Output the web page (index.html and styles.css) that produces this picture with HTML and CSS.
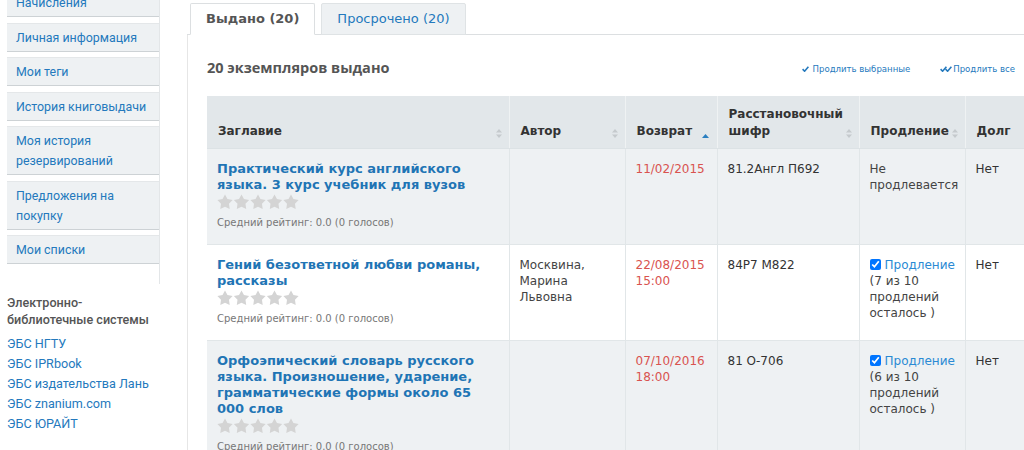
FILE: index.html
```html
<!DOCTYPE html>
<html lang="ru">
<head>
    <meta charset="UTF-8">
    <meta name="viewport" content="width=device-width, initial-scale=1.0">
    <title>Мои экземпляры</title>
    <link rel="stylesheet" href="styles.css">
</head>
<body>
    <!-- one star shape, reused by every rating row -->
    <svg class="defs" width="0" height="0">
        <symbol id="star" viewBox="0 0 16 16">
            <polygon points="8,0.5 10.47,5.1 15.61,6.03 11.99,9.8 12.7,14.97 8,12.7 3.3,14.97 4.01,9.8 0.39,6.03 5.53,5.1"/>
        </symbol>
    </svg>

    <div class="page">
        <aside class="sidebar">
            <ul class="side-nav">
                <li><a href="#">Начисления</a></li>
                <li><a href="#">Личная информация</a></li>
                <li><a href="#">Мои теги</a></li>
                <li><a href="#">История книговыдачи</a></li>
                <li><a href="#">Моя история резервирований</a></li>
                <li><a href="#">Предложения на покупку</a></li>
                <li><a href="#">Мои списки</a></li>
            </ul>
            <div class="ebs">
                <h3>Электронно-библиотечные системы</h3>
                <ul>
                    <li><a href="#">ЭБС НГТУ</a></li>
                    <li><a href="#">ЭБС IPRbook</a></li>
                    <li><a href="#">ЭБС издательства Лань</a></li>
                    <li><a href="#">ЭБС znanium.com</a></li>
                    <li><a href="#">ЭБС ЮРАЙТ</a></li>
                </ul>
            </div>
        </aside>

        <main class="content">
            <ul class="tabs">
                <li class="tab active"><a href="#">Выдано (20)</a></li>
                <li class="tab"><a href="#">Просрочено (20)</a></li>
            </ul>
            <div class="tab-panel">
                <div class="panel-head">
                    <h2>20 экземпляров выдано</h2>
                    <div class="actions">
                        <a href="#" class="act">
                            <svg width="7" height="6" viewBox="0 0 7 6"><path d="M0.6 3.1 L2.6 5.2 L6.4 0.8"/></svg>
                            Продлить выбранные
                        </a>
                        <a href="#" class="act">
                            <svg width="12" height="6" viewBox="0 0 12 6"><path d="M0.6 3.1 L2.6 5.2 L6.4 0.8 M5.6 3.1 L7.6 5.2 L11.4 0.8"/></svg>Продлить все
                        </a>
                    </div>
                </div>

                <table class="loans">
                    <colgroup>
                        <col class="c-title">
                        <col class="c-author">
                        <col class="c-due">
                        <col class="c-call">
                        <col class="c-renew">
                        <col class="c-debt">
                    </colgroup>
                    <thead>
                        <tr>
                            <th><div class="th-inner"><span>Заглавие</span><svg class="sort" width="6" height="9" viewBox="0 0 6 9"><path d="M0 3.5 L3 0 L6 3.5Z M0 5.5 L3 9 L6 5.5Z"/></svg></div></th>
                            <th><div class="th-inner"><span>Автор</span><svg class="sort" width="6" height="9" viewBox="0 0 6 9"><path d="M0 3.5 L3 0 L6 3.5Z M0 5.5 L3 9 L6 5.5Z"/></svg></div></th>
                            <th><div class="th-inner"><span>Возврат</span><svg class="sort asc" width="7" height="4" viewBox="0 0 7 4"><path d="M0 4 L3.5 0 L7 4Z"/></svg></div></th>
                            <th><div class="th-inner"><span>Расстановочный шифр</span><svg class="sort" width="6" height="9" viewBox="0 0 6 9"><path d="M0 3.5 L3 0 L6 3.5Z M0 5.5 L3 9 L6 5.5Z"/></svg></div></th>
                            <th><div class="th-inner"><span>Продление</span><svg class="sort" width="6" height="9" viewBox="0 0 6 9"><path d="M0 3.5 L3 0 L6 3.5Z M0 5.5 L3 9 L6 5.5Z"/></svg></div></th>
                            <th><div class="th-inner"><span>Долг</span><svg class="sort" width="6" height="9" viewBox="0 0 6 9"><path d="M0 3.5 L3 0 L6 3.5Z M0 5.5 L3 9 L6 5.5Z"/></svg></div></th>
                        </tr>
                    </thead>
                    <tbody>
                        <tr>
                            <td>
                                <a href="#" class="title">Практический курс английского языка. 3 курс учебник для вузов</a>
                                <svg class="stars" width="82" height="16" viewBox="0 0 82 16">
                                    <use href="#star" x="0" width="16" height="16"/>
                                    <use href="#star" x="16.5" width="16" height="16"/>
                                    <use href="#star" x="33" width="16" height="16"/>
                                    <use href="#star" x="49.5" width="16" height="16"/>
                                    <use href="#star" x="66" width="16" height="16"/>
                                </svg>
                                <div class="rating">Средний рейтинг: 0.0 (0 голосов)</div>
                            </td>
                            <td></td>
                            <td class="due">11/02/2015</td>
                            <td>81.2Англ П692</td>
                            <td class="muted">Не продлевается</td>
                            <td>Нет</td>
                        </tr>
                        <tr>
                            <td>
                                <a href="#" class="title">Гений безответной любви романы, рассказы</a>
                                <svg class="stars" width="82" height="16" viewBox="0 0 82 16">
                                    <use href="#star" x="0" width="16" height="16"/>
                                    <use href="#star" x="16.5" width="16" height="16"/>
                                    <use href="#star" x="33" width="16" height="16"/>
                                    <use href="#star" x="49.5" width="16" height="16"/>
                                    <use href="#star" x="66" width="16" height="16"/>
                                </svg>
                                <div class="rating">Средний рейтинг: 0.0 (0 голосов)</div>
                            </td>
                            <td class="muted">Москвина, Марина Львовна</td>
                            <td class="due">22/08/2015 15:00</td>
                            <td>84P7 M822</td>
                            <td class="muted"><span class="renew-box"><input type="checkbox" checked><a href="#" class="renew">Продление</a></span> (7 из 10 продлений осталось )</td>
                            <td>Нет</td>
                        </tr>
                        <tr>
                            <td>
                                <a href="#" class="title">Орфоэпический словарь русского языка. Произношение, ударение, грамматические формы около 65 000 слов</a>
                                <svg class="stars" width="82" height="16" viewBox="0 0 82 16">
                                    <use href="#star" x="0" width="16" height="16"/>
                                    <use href="#star" x="16.5" width="16" height="16"/>
                                    <use href="#star" x="33" width="16" height="16"/>
                                    <use href="#star" x="49.5" width="16" height="16"/>
                                    <use href="#star" x="66" width="16" height="16"/>
                                </svg>
                                <div class="rating">Средний рейтинг: 0.0 (0 голосов)</div>
                            </td>
                            <td></td>
                            <td class="due">07/10/2016 18:00</td>
                            <td>81 О-706</td>
                            <td class="muted"><span class="renew-box"><input type="checkbox" checked><a href="#" class="renew">Продление</a></span> (6 из 10 продлений осталось )</td>
                            <td>Нет</td>
                        </tr>
                    </tbody>
                </table>
            </div>
        </main>
    </div>
</body>
</html>
```

FILE: styles.css
```css
body {
    margin: 0;
    background-color: #fff;
    font-family: Roboto, Arial, sans-serif;
    color: #333;
    overflow: hidden;
}
a {
    text-decoration: none;
}
ul {
    list-style: none;
    margin: 0;
    padding: 0;
}
.defs {
    position: absolute;
}
.page {
    display: flex;
    align-items: flex-start;
    padding-left: 7px;
}

/* left column */
.sidebar {
    width: 153px;
    flex: none;
    margin-right: 27px;
}
.side-nav {
    margin-top: -12px;
    padding-bottom: 14px;
    border-right: 1px solid #e3e6e8;
}
.side-nav li {
    margin-bottom: 5.5px;
    background-color: #eef1f3;
    border-top: 1px solid #e4e7e9;
    border-bottom: 1px solid #cdd2d5;
}
.side-nav a {
    display: block;
    padding: 4px 6px 3px 9px;
    font-size: 12.4px;
    line-height: 20px;
    color: #2479bd;
}
.ebs {
    margin-top: 10px;
}
.ebs h3 {
    margin: 0 0 6px;
    font-size: 12.6px;
    font-weight: 500;
    line-height: 17px;
    color: #555;
}
.ebs li {
    font-size: 12.6px;
    line-height: 20px;
}
.ebs a {
    color: #2479bd;
}

/* main column */
.content {
    flex: 1;
    min-width: 0;
    font-family: "DejaVu Sans", Verdana, sans-serif;
}
.tabs {
    display: flex;
    gap: 6px;
    margin-top: 3px;
    padding-left: 3px;
    border-bottom: 1px solid #dcdfe1;
}
.tab {
    margin-bottom: -1px;
    border: 1px solid #dfe3e5;
    border-radius: 2px 2px 0 0;
    background-color: #eef1f3;
}
.tab a {
    display: block;
    padding: 6px 15px 7px;
    font-size: 13px;
    line-height: 17px;
    color: #2479bd;
}
.tab.active {
    background-color: #fff;
    border-color: #dcdfe1;
    border-bottom-color: #fff;
}
.tab.active a {
    color: #555;
    font-weight: bold;
}
.tab-panel {
    min-height: 420px;
    padding: 24px 9px 0 19px;
    border-left: 1px solid #e6e6e6;
}
.panel-head {
    display: flex;
    justify-content: space-between;
    align-items: flex-end;
    margin-bottom: 19px;
}
.panel-head h2 {
    margin: 0;
    font-family: "Open Sans", Arial, sans-serif;
    font-size: 14.5px;
    font-weight: bold;
    line-height: 18px;
    color: #555;
}
.actions {
    display: flex;
    gap: 30px;
    margin-bottom: 1px;
}
.act {
    font-family: "DejaVu Sans Condensed", "DejaVu Sans", sans-serif;
    font-size: 9.5px;
    line-height: 14px;
    color: #2479bd;
}
.act svg {
    fill: none;
    stroke: #2479bd;
    stroke-width: 1.6;
    margin-right: 1px;
}

/* loans table */
.loans {
    border-collapse: collapse;
    table-layout: fixed;
    width: 830px;
    font-size: 12px;
}
.c-title { width: 302px; }
.c-author { width: 116px; }
.c-due { width: 92px; }
.c-call { width: 142px; }
.c-renew { width: 106px; }
.c-debt { width: 72px; }

.loans th {
    padding: 10px 7px 8px 11px;
    background-color: #e2e7ea;
    border-right: 1px solid #eff2f3;
    border-bottom: 1px solid #dce2e5;
    vertical-align: bottom;
    text-align: left;
    font-weight: bold;
    line-height: 17px;
    color: #333;
}
.th-inner {
    display: flex;
    justify-content: space-between;
    align-items: flex-end;
    gap: 2px;
}
.sort {
    flex: none;
    margin-bottom: 2px;
    fill: #c5cacd;
}
.sort.asc {
    fill: #2a7fc0;
    margin-right: 1px;
}
.loans td {
    padding: 12px 10px 13px;
    vertical-align: top;
    line-height: 16px;
    color: #333;
    border-right: 1px solid #e1e6e8;
    border-bottom: 1px solid #e1e6e8;
}
.loans tbody tr:nth-child(odd) td {
    background-color: #eef1f3;
}
.title {
    display: block;
    max-width: 268px;
    font-size: 13px;
    font-weight: bold;
    color: #1f75b5;
}
.stars {
    display: block;
    margin-top: 1px;
    fill: #d4d4d4;
}
.rating {
    margin-top: 5px;
    font-size: 10px;
    color: #777;
}
.loans td.due {
    color: #d9534f;
}
.loans td.muted {
    color: #444;
}
.renew-box {
    white-space: nowrap;
}
.loans input {
    width: 11px;
    height: 11px;
    margin: 0 4px 0 0;
    vertical-align: -1px;
}
.renew {
    color: #2a8ad4;
}
```
